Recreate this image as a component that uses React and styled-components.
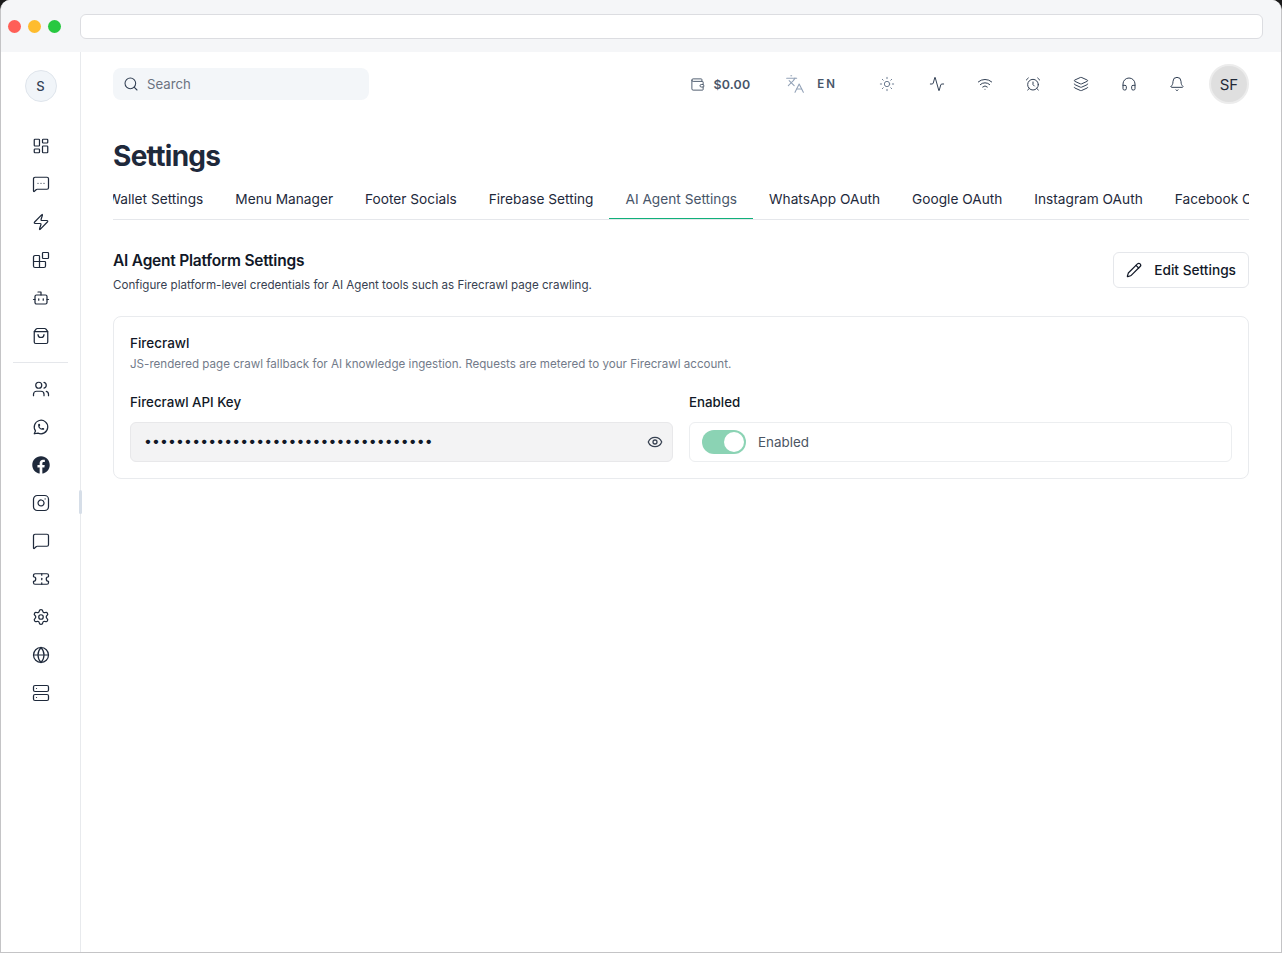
import React from "react";
import styled, { createGlobalStyle } from "styled-components";
import {
  Activity,
  AlarmClock,
  Bell,
  Blocks,
  Bot,
  Eye,
  Globe,
  Headphones,
  Instagram,
  Languages,
  LayoutDashboard,
  Layers,
  MessageSquare,
  MessageSquareMore,
  Pencil,
  Search,
  Server,
  Settings,
  ShoppingBag,
  Sun,
  Ticket,
  Users,
  Wallet,
  Wifi,
  Zap,
} from "lucide-react";
import { FaFacebook } from "react-icons/fa";
import { TbBrandWhatsapp } from "react-icons/tb";

const GlobalStyle = createGlobalStyle`
  html, body {
    margin: 0;
    padding: 0;
    background: #1b1b1b;
  }
  * {
    box-sizing: border-box;
  }
  body {
    font-family: Inter, "Noto Sans", sans-serif;
    -webkit-font-smoothing: antialiased;
  }
`;

const Window = styled.div`
  width: 1282px;
  height: 953px;
  background: #fff;
  border: 1px solid #c4c4c6;
  border-top: 0;
  border-radius: 10px 10px 0 0;
  overflow: hidden;
  display: flex;
  flex-direction: column;
`;

const Chrome = styled.div`
  height: 52px;
  flex: none;
  background: #f5f6f8;
  display: flex;
  align-items: center;
  padding: 0 18px 0 7px;
  gap: 7px;
`;

const Light = styled.span`
  width: 13px;
  height: 13px;
  border-radius: 50%;
  background: ${(props) => props.color};
`;

const AddressBar = styled.div`
  flex: 1;
  height: 25px;
  margin-left: 12px;
  background: #fff;
  border: 1px solid #dcdde1;
  border-radius: 6px;
`;

const Body = styled.div`
  flex: 1;
  display: flex;
  min-height: 0;
`;

const Sidebar = styled.aside`
  width: 80px;
  flex: none;
  border-right: 1px solid #e8eaed;
  display: flex;
  flex-direction: column;
  align-items: center;
  padding: 18px 0 0 0;
  position: relative;
`;

const ScrollThumb = styled.div`
  position: absolute;
  top: 438px;
  right: -2px;
  width: 3px;
  height: 24px;
  border-radius: 2px;
  background: #d6dee8;
`;

const Logo = styled.div`
  width: 32px;
  height: 32px;
  border-radius: 50%;
  background: #f1f5f9;
  border: 1px solid #dfe5ec;
  color: #334155;
  font-size: 13px;
  font-weight: 500;
  display: flex;
  align-items: center;
  justify-content: center;
  margin-bottom: 25px;
`;

const SideIcon = styled.div`
  height: 38px;
  width: 38px;
  flex: none;
  display: flex;
  align-items: center;
  justify-content: center;
  color: #1e293b;
`;

const SideDivider = styled.div`
  width: 55px;
  height: 1px;
  flex: none;
  background: #e5e7eb;
  margin: 7px 0 7px;
`;

const Main = styled.main`
  flex: 1;
  min-width: 0;
  padding: 12px 32px 0 32px;
`;

const TopBar = styled.header`
  height: 40px;
  display: flex;
  align-items: center;
  justify-content: space-between;
`;

const SearchBox = styled.div`
  width: 256px;
  height: 32px;
  border-radius: 8px;
  background: #f3f6f9;
  display: flex;
  align-items: center;
  gap: 8px;
  padding: 0 10px;
  color: #6b7280;
  font-size: 13.2px;
  svg {
    color: #334155;
  }
`;

const TopActions = styled.div`
  display: flex;
  align-items: center;
`;

const Balance = styled.div`
  display: flex;
  align-items: center;
  gap: 8px;
  color: #475569;
  font-size: 12.4px;
  font-weight: 600;
  letter-spacing: 0.2px;
  margin-right: 35px;
`;

const Lang = styled.div`
  display: flex;
  align-items: center;
  gap: 12px;
  color: #475569;
  font-size: 11.5px;
  font-weight: 600;
  letter-spacing: 2px;
  margin-right: 26px;
  svg {
    color: #94a3b8;
  }
`;

const ActionIcon = styled.div`
  width: 48px;
  display: flex;
  justify-content: center;
  color: ${(props) => props.$color || "#334155"};
`;

const SunIcon = styled(ActionIcon)`
  margin-right: 2px;
`;

const Avatar = styled.div`
  width: 40px;
  height: 40px;
  border-radius: 50%;
  background: #dfdfdf;
  border: 2px solid #ececec;
  color: #1f2937;
  font-size: 15px;
  display: flex;
  align-items: center;
  justify-content: center;
  margin-left: 8px;
`;

const Title = styled.h1`
  margin: 34px 0 0;
  font-size: 28px;
  line-height: 36px;
  font-weight: 700;
  color: #1e293b;
  letter-spacing: -0.7px;
`;

const TabStrip = styled.nav`
  margin-top: 6px;
  height: 40px;
  border-bottom: 1px solid #e5e7eb;
  overflow: hidden;
`;

const TabRow = styled.div`
  display: flex;
  margin-left: -21.5px;
  width: max-content;
`;

const Tab = styled.div`
  height: 39px;
  padding: 0 16px 0;
  line-height: 38px;
  font-size: 13.7px;
  white-space: nowrap;
  color: ${(props) => (props.$active ? "#475569" : "#1e293b")};
  border-bottom: 1px solid ${(props) => (props.$active ? "#10b07a" : "transparent")};
`;

const SectionHead = styled.div`
  margin-top: 32px;
  display: flex;
  justify-content: space-between;
  align-items: flex-start;
`;

const SectionTitle = styled.h2`
  margin: 0;
  padding-top: 1px;
  font-size: 15.5px;
  line-height: 16px;
  font-weight: 600;
  color: #111827;
  letter-spacing: -0.22px;
`;

const SectionSub = styled.p`
  margin: 8px 0 0;
  font-size: 11.6px;
  line-height: 16px;
  color: #374151;
`;

const EditButton = styled.button`
  height: 36px;
  padding: 0 12px;
  background: #fff;
  border: 1px solid #e5e7eb;
  border-radius: 6px;
  display: flex;
  align-items: center;
  gap: 12px;
  font-family: inherit;
  font-size: 13.7px;
  font-weight: 500;
  color: #111827;
`;

const Card = styled.section`
  margin-top: 23px;
  height: 163px;
  border: 1px solid #e9ebee;
  border-radius: 8px;
  padding: 16px;
`;

const CardTitle = styled.div`
  font-size: 13.5px;
  line-height: 20px;
  font-weight: 500;
  color: #111827;
`;

const CardSub = styled.div`
  margin-top: 3px;
  font-size: 11.6px;
  line-height: 16px;
  color: #737b8a;
`;

const FieldGrid = styled.div`
  margin-top: 22px;
  display: grid;
  grid-template-columns: 1fr 1fr;
  gap: 16px;
`;

const FieldLabel = styled.div`
  font-size: 13.3px;
  line-height: 16px;
  font-weight: 500;
  color: #111827;
  margin-bottom: 12px;
`;

const KeyInput = styled.div`
  height: 40px;
  border: 1px solid #e8e8ea;
  border-radius: 6px;
  background: #f3f3f4;
  display: flex;
  align-items: center;
  justify-content: space-between;
  padding: 0 9px 0 13px;
  color: #111827;
  font-size: 14px;
  letter-spacing: 0.15px;
  svg {
    color: #374151;
  }
`;

const KeyDots = styled.span`
  padding-bottom: 4px;
`;

const ToggleBox = styled.div`
  height: 40px;
  border: 1px solid #eceef0;
  border-radius: 6px;
  display: flex;
  align-items: center;
  gap: 12px;
  padding: 0 12px;
  font-size: 13.4px;
  color: #4b5563;
`;

const Switch = styled.span`
  width: 44px;
  height: 24px;
  border-radius: 12px;
  background: #8bd3b4;
  display: flex;
  align-items: center;
  justify-content: flex-end;
  padding: 0 2px;
  &::after {
    content: "";
    width: 20px;
    height: 20px;
    border-radius: 50%;
    background: #fff;
  }
`;

const upperNav = [LayoutDashboard, MessageSquareMore, Zap, Blocks, Bot, ShoppingBag];
const lowerNav = [Users, TbBrandWhatsapp, FaFacebook, Instagram, MessageSquare, Ticket, Settings, Globe, Server];
const topIcons = [Activity, Wifi, AlarmClock, Layers, Headphones, Bell];
const tabs = [
  "Wallet Settings",
  "Menu Manager",
  "Footer Socials",
  "Firebase Setting",
  "AI Agent Settings",
  "WhatsApp OAuth",
  "Google OAuth",
  "Instagram OAuth",
  "Facebook OAuth",
];

export default function App() {
  return (
    <>
      <GlobalStyle />
      <Window>
        <Chrome>
          <Light color="#ff5f57" />
          <Light color="#febc2e" />
          <Light color="#28c840" />
          <AddressBar />
        </Chrome>
        <Body>
          <Sidebar>
            <Logo>S</Logo>
            {upperNav.map((Icon, i) => (
              <SideIcon key={i}>
                <Icon size={18} strokeWidth={1.65} />
              </SideIcon>
            ))}
            <SideDivider />
            {lowerNav.map((Icon, i) => (
              <SideIcon key={i}>
                <Icon size={18} strokeWidth={1.65} />
              </SideIcon>
            ))}
            <ScrollThumb />
          </Sidebar>
          <Main>
            <TopBar>
              <SearchBox>
                <Search size={16} strokeWidth={1.6} />
                Search
              </SearchBox>
              <TopActions>
                <Balance>
                  <Wallet size={15} strokeWidth={1.5} />
                  $0.00
                </Balance>
                <Lang>
                  <Languages size={20} strokeWidth={1.3} />
                  EN
                </Lang>
                <SunIcon $color="#64748b">
                  <Sun size={16} strokeWidth={1.4} />
                </SunIcon>
                {topIcons.map((Icon, i) => (
                  <ActionIcon key={i}>
                    <Icon size={16} strokeWidth={1.5} />
                  </ActionIcon>
                ))}
                <Avatar>SF</Avatar>
              </TopActions>
            </TopBar>
            <Title>Settings</Title>
            <TabStrip>
              <TabRow>
                {tabs.map((t) => (
                  <Tab key={t} $active={t === "AI Agent Settings"}>
                    {t}
                  </Tab>
                ))}
              </TabRow>
            </TabStrip>
            <SectionHead>
              <div>
                <SectionTitle>AI Agent Platform Settings</SectionTitle>
                <SectionSub>
                  Configure platform-level credentials for AI Agent tools such as Firecrawl page crawling.
                </SectionSub>
              </div>
              <EditButton>
                <Pencil size={16} strokeWidth={1.8} />
                Edit Settings
              </EditButton>
            </SectionHead>
            <Card>
              <CardTitle>Firecrawl</CardTitle>
              <CardSub>
                JS-rendered page crawl fallback for AI knowledge ingestion. Requests are metered to your Firecrawl account.
              </CardSub>
              <FieldGrid>
                <div>
                  <FieldLabel>Firecrawl API Key</FieldLabel>
                  <KeyInput>
                    <KeyDots>{"•".repeat(36)}</KeyDots>
                    <Eye size={16} strokeWidth={1.9} />
                  </KeyInput>
                </div>
                <div>
                  <FieldLabel>Enabled</FieldLabel>
                  <ToggleBox>
                    <Switch />
                    Enabled
                  </ToggleBox>
                </div>
              </FieldGrid>
            </Card>
          </Main>
        </Body>
      </Window>
    </>
  );
}
